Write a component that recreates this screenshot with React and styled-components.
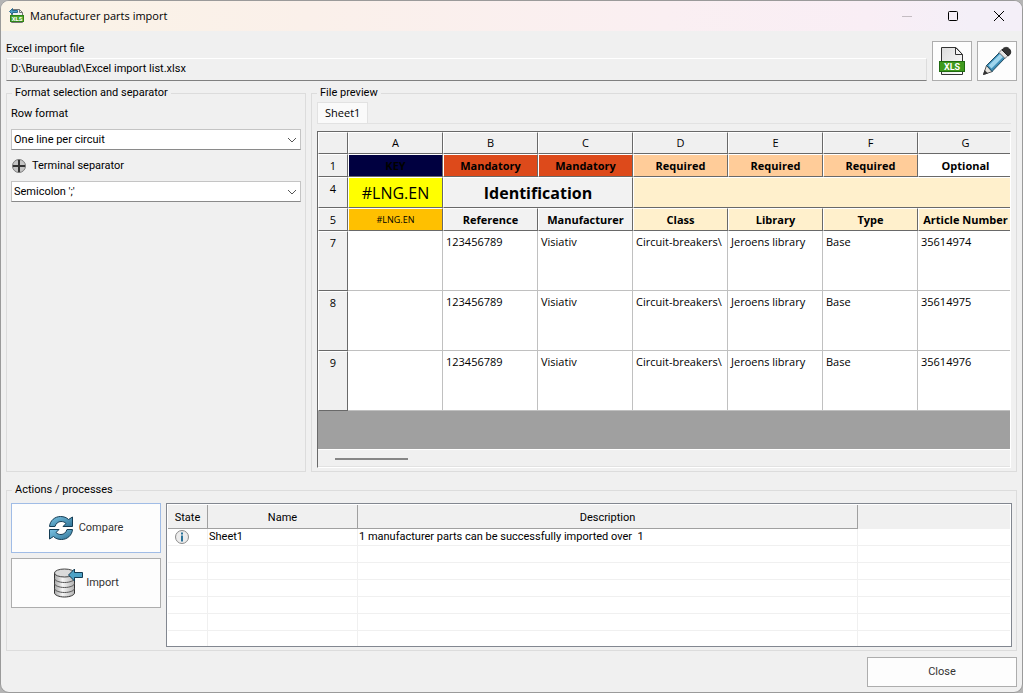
import React, { useState } from 'react';
import styled, { createGlobalStyle } from 'styled-components';

const GlobalStyle = createGlobalStyle`
  * {
    box-sizing: border-box;
  }
  body {
    margin: 0;
    background: #b4b4b4;
    font-family: Roboto, 'Open Sans', sans-serif;
    font-size: 11px;
    line-height: 16px;
    color: #000;
  }
  button, input, select {
    font: inherit;
    color: inherit;
  }
`;

const Window = styled.main`
  display: flex;
  flex-direction: column;
  min-height: 100vh;
  border: 1px solid #9a9a9a;
  border-radius: 9px;
  background: #f0f0f0;
  overflow: hidden;
`;

const TitleBar = styled.header`
  display: flex;
  align-items: center;
  height: 30px;
  padding-left: 8px;
  background: linear-gradient(90deg, #faf3e6 0%, #faf0ea 30%, #faeff2 65%, #f9eef5 85%, #f4eff8 95%);
`;

const Title = styled.h1`
  flex: 1;
  margin: 0 0 0 5px;
  font-family: 'Open Sans', 'Noto Sans', sans-serif;
  font-size: 11px;
  font-weight: 400;
`;

const CaptionButton = styled.button`
  display: flex;
  align-items: center;
  justify-content: center;
  width: 46px;
  height: 30px;
  padding: 0;
  border: 0;
  background: none;
`;

const Body = styled.div`
  flex: 1;
  display: flex;
  flex-direction: column;
  padding: 10px 5px 5px;
`;

const FileRow = styled.div`
  display: flex;
  gap: 5px;
`;

const FileField = styled.div`
  flex: 1;
  display: flex;
  flex-direction: column;
  justify-content: space-between;
`;

const PathInput = styled.input`
  width: 100%;
  height: 23px;
  padding: 0 4px 2px;
  border: 1px solid #dcdcdc;
  border-top-color: #fff;
  border-bottom-color: #808080;
  background: #f0f0f0;
`;

const PushButton = styled.button`
  display: flex;
  align-items: center;
  justify-content: center;
  gap: ${(props) => props.$gap || 0}px;
  width: ${(props) => props.$width}px;
  height: ${(props) => props.$height}px;
  padding: 0;
  border: 1px solid ${(props) => (props.$active ? '#a0bce6' : '#adadad')};
  background: #fdfdfd;
  color: #333;
`;

const Panels = styled.div`
  flex: 1;
  display: flex;
  gap: 5px;
  margin-top: 4px;
`;

const Group = styled.fieldset`
  display: flex;
  flex-direction: column;
  flex: ${(props) => props.$flex || 'none'};
  min-width: 0;
  margin: ${(props) => props.$top || 0}px 0 0;
  padding: ${(props) => props.$padding};
  border: 1px solid #dcdcdc;

  legend {
    margin-left: ${(props) => props.$legend || 0}px;
    padding: 0 3px;
  }
`;

const FieldLabel = styled.label`
  display: flex;
  align-items: center;
  gap: 5px;
  margin-top: ${(props) => props.$top || 0}px;
`;

const SelectBox = styled.div`
  display: grid;
  align-items: center;
  margin-top: 7px;

  select, svg {
    grid-area: 1 / 1;
  }
  select {
    appearance: none;
    width: 100%;
    height: 21px;
    padding: 0 20px 0 2px;
    border: 1px solid #c4c4c4;
    border-bottom-color: #8a8a8a;
    border-radius: 0;
    background: #fff;
  }
  svg {
    justify-self: end;
    margin-right: 4px;
    pointer-events: none;
  }
`;

const Tabs = styled.div`
  display: flex;
  border-bottom: 1px solid #e2e2e2;
`;

const Tab = styled.button`
  height: 21px;
  padding: 0 7px;
  border: 1px solid #e2e2e2;
  border-bottom: 0;
  background: #fafafa;
  font-family: 'Open Sans', 'Noto Sans', sans-serif;
`;

const SheetFrame = styled.div`
  flex: 1;
  display: flex;
  flex-direction: column;
  margin-top: 7px;
  border: 1px solid #fff;
  border-top: 1px solid #696969;
  border-left: 1px solid #696969;
  background: #a0a0a0;
`;

const SheetScroll = styled.div`
  flex: 1;
  overflow: hidden;
`;

const Sheet = styled.table`
  table-layout: fixed;
  width: 695px;
  border-collapse: separate;
  border-spacing: 0;
  font-family: 'Open Sans', 'Noto Sans', sans-serif;

  th, td {
    padding: 0;
    overflow: hidden;
    white-space: nowrap;
  }
`;

const HeadCell = styled.th`
  height: ${(props) => props.$height || 23}px;
  border: 1px solid #696969;
  border-top-color: #fff;
  border-left-color: #fff;
  background: ${(props) => props.$bg || '#f0f0f0'};
  font-size: ${(props) => props.$size || 11}px;
  font-weight: ${(props) => (props.$bold ? 700 : 400)};
  color: #000;
`;

const RowHead = styled(HeadCell)`
  vertical-align: top;

  span {
    display: block;
    padding-top: 3px;
  }
`;

const DataCell = styled.td`
  height: 60px;
  border-right: 1px solid #c0c0c0;
  border-bottom: 1px solid #c0c0c0;
  background: #fff;
  vertical-align: top;

  span {
    display: block;
    padding: 3px 0 0 3px;
  }
`;

const ScrollTrack = styled.div`
  height: 18px;
  padding: 8px 17px 0;
  border-top: 1px solid #fff;
  border-bottom: 1px solid #e2e2e2;
  background: #f0f0f0;
`;

const ScrollThumb = styled.div`
  width: 73px;
  height: 2px;
  background: #868686;
`;

const ActionsRow = styled.div`
  display: flex;
  gap: 5px;
`;

const ActionButtons = styled.div`
  display: flex;
  flex-direction: column;
  gap: 5px;
`;

const LogFrame = styled.div`
  flex: 1;
  height: 144px;
  padding: 1px;
  border: 1px solid #828790;
  background: #fff;
  overflow: hidden;
`;

const Log = styled.table`
  table-layout: fixed;
  width: 100%;
  border-collapse: separate;
  border-spacing: 0;

  th {
    height: 24px;
    padding: 2px 0 0;
    border-right: 1px solid #a0a0a0;
    border-bottom: 1px solid #a0a0a0;
    background: #f0f0f0;
    font-weight: 400;
  }
  th:last-child {
    border-color: #f0f0f0;
  }
  td {
    height: 17px;
    padding: 0 0 0 1px;
    border-right: 1px solid #f0f0f0;
    border-bottom: 1px solid #f0f0f0;
    white-space: pre;
  }
  td:last-child {
    border-right: 0;
  }
  tr > td:first-child {
    padding-left: 7px;
  }
  svg {
    display: block;
  }
`;

const Footer = styled.footer`
  display: flex;
  justify-content: flex-end;
  margin-top: 6px;
`;

const XlsIcon = () => (
  <svg width="30" height="30" viewBox="0 0 30 30" aria-hidden="true">
    <defs>
      <linearGradient id="sheet" x1="0" y1="0" x2="1" y2="1">
        <stop offset="0" stopColor="#dcdcdc" />
        <stop offset="1" stopColor="#fff" />
      </linearGradient>
    </defs>
    <path d="M4.500 1.500h14.500l6.500 7v20h-21z" fill="url(#sheet)" stroke="#333" />
    <path d="M18.500 1.500v7h7z" fill="#f4f4f4" stroke="#333" />
    <rect x="2.500" y="15.500" width="25" height="10" fill="#3f9a1e" stroke="#1f6b10" />
    <text x="15" y="24" textAnchor="middle" fontFamily="Roboto, sans-serif" fontWeight="700" fontSize="9" fill="#fff">
      XLS
    </text>
  </svg>
);

const ImportXlsIcon = () => (
  <svg width="16" height="16" viewBox="0 0 16 16" aria-hidden="true">
    <path d="M2.500 1.500h8l3 3v10h-11z" fill="#f2f2f2" stroke="#777" />
    <path d="M10.500 1.500v3h3" fill="none" stroke="#777" />
    <rect x="1.500" y="7.500" width="13" height="6" fill="#4ba52a" stroke="#2f8418" />
    <text x="8" y="13" textAnchor="middle" fontFamily="Roboto, sans-serif" fontWeight="700" fontSize="6" fill="#fff">
      XLS
    </text>
    <path d="M.5 3.500l3-3V2.500h5v2h-5v2z" fill="#4a9cc4" stroke="#2a6a8c" />
  </svg>
);

const PencilIcon = () => (
  <svg width="30" height="30" viewBox="0 0 30 30" aria-hidden="true">
    <path d="M1.500 28.500l3-9 6 6z" fill="#e8e4de" stroke="#555" />
    <path d="M1 29l1.500-5 3.500 3.500z" fill="#333" />
    <path d="M4.500 19.500L18 6l5.500 5.500L10 25.500z" fill="#3d8fb8" stroke="#1f4a60" />
    <path d="M6.500 19.500L18 8l3 3L9.500 22.500z" fill="#9fd6ee" />
    <path d="M17 6.500l3.500-3.500 6 6-3.500 3.500z" fill="#e4e4e4" stroke="#777" />
    <path d="M20 4c1.500-3 5.500-3.500 7.500-1s1.500 5.500-1.500 7z" fill="#333" stroke="#222" />
  </svg>
);

const RefreshIcon = () => (
  <svg width="24" height="24" viewBox="0 0 24 24" aria-hidden="true">
    <defs>
      <linearGradient id="blue" x1="0" y1="0" x2="1" y2="1">
        <stop offset="0" stopColor="#7cc4e4" />
        <stop offset="1" stopColor="#2f7396" />
      </linearGradient>
    </defs>
    <g fill="url(#blue)" stroke="#143c54">
      <path d="M.5 10.500C1 4.500 6 .5 11.500.5c3.500 0 6 1 8 3l4-2.500v9.500H14l3-3c-1.500-1.500-3-2-5-2-3 0-5 2-6 5z" />
      <path d="M23.500 13.500C23 19.500 18 23.500 12.500 23.500c-3.500 0-6-1-8-3l-4 2.500v-9.500H10l-3 3c1.500 1.500 3 2 5 2 3 0 5-2 6-5z" />
    </g>
  </svg>
);

const DatabaseIcon = () => (
  <svg width="30" height="30" viewBox="0 0 30 30" aria-hidden="true">
    <defs>
      <linearGradient id="metal" x1="0" y1="0" x2="1" y2="0">
        <stop offset="0" stopColor="#a8a8a8" />
        <stop offset="0.4" stopColor="#f4f4f4" />
        <stop offset="1" stopColor="#b4b4b4" />
      </linearGradient>
    </defs>
    <path d="M1.500 5v20c0 2 4.500 4 10 4s10-2 10-4V5z" fill="url(#metal)" stroke="#333" />
    <ellipse cx="11.500" cy="5" rx="10" ry="4" fill="#dadada" stroke="#444" />
    <path d="M1.500 10.500c0 2 4.500 4 10 4s10-2 10-4M1.500 15.500c0 2 4.500 4 10 4s10-2 10-4M1.500 20.500c0 2 4.500 4 10 4s10-2 10-4" fill="none" stroke="#555" />
    <path d="M15.500 7l6-6v3.500h8v5h-8V13z" fill="#4ea2c6" stroke="#143c54" />
  </svg>
);

const PlusIcon = () => (
  <svg width="16" height="16" viewBox="0 0 16 16" aria-hidden="true">
    <circle cx="8" cy="8" r="6.500" fill="#c4c4c4" stroke="#777" />
    <path d="M8 2v12M2 8h12" stroke="#333" strokeWidth="2" />
  </svg>
);

const InfoIcon = () => (
  <svg width="14" height="14" viewBox="0 0 14 14" role="img" aria-label="Information">
    <circle cx="7" cy="7" r="6.500" fill="#ececec" stroke="#8a8a8a" />
    <path d="M7 2.500v2M7 5.500v6" stroke="#2b7299" strokeWidth="2" />
  </svg>
);

const Chevron = () => (
  <svg width="10" height="6" viewBox="0 0 10 6" aria-hidden="true">
    <path d="M1 1l4 4 4-4" fill="none" stroke="#555" />
  </svg>
);

const columns = ['A', 'B', 'C', 'D', 'E', 'F', 'G'];

const requirements = [
  { text: 'KEY', bg: '#000040' },
  { text: 'Mandatory', bg: '#dd4a1b' },
  { text: 'Mandatory', bg: '#dd4a1b' },
  { text: 'Required', bg: '#ffcc99' },
  { text: 'Required', bg: '#ffcc99' },
  { text: 'Required', bg: '#ffcc99' },
  { text: 'Optional', bg: '#ffffff' },
];

const fields = [
  { text: 'Reference', bg: '#f2f2f2' },
  { text: 'Manufacturer', bg: '#f2f2f2' },
  { text: 'Class', bg: '#fff0cc' },
  { text: 'Library', bg: '#fff0cc' },
  { text: 'Type', bg: '#fff0cc' },
  { text: 'Article Number', bg: '#fff0cc' },
];

const parts = [
  { row: 7, article: '35614974' },
  { row: 8, article: '35614975' },
  { row: 9, article: '35614976' },
];

const emptyRows = [1, 2, 3, 4, 5, 6];

function SheetPreview() {
  return (
    <Sheet>
      <colgroup>
        <col width="30" />
        {columns.map((column) => (
          <col key={column} width="95" />
        ))}
      </colgroup>
      <thead>
        <tr>
          <HeadCell $height={22} />
          {columns.map((column) => (
            <HeadCell key={column} $height={22} scope="col">{column}</HeadCell>
          ))}
        </tr>
      </thead>
      <tbody>
        <tr>
          <RowHead scope="row"><span>1</span></RowHead>
          {requirements.map((item, index) => (
            <HeadCell key={columns[index]} as="td" align="center" $bold $bg={item.bg}>
              {item.text}
            </HeadCell>
          ))}
        </tr>
        <tr>
          <RowHead scope="row" $height={31}><span>4</span></RowHead>
          <HeadCell as="td" align="center" $bg="#ffff00" $size={16}>#LNG.EN</HeadCell>
          <HeadCell as="td" align="center" colSpan={2} $bg="#f2f2f2" $size={16} $bold>Identification</HeadCell>
          <HeadCell as="td" colSpan={4} $bg="#fff0cc" />
        </tr>
        <tr>
          <RowHead scope="row"><span>5</span></RowHead>
          <HeadCell as="td" align="center" $bg="#ffc000" $size={9}>#LNG.EN</HeadCell>
          {fields.map((field) => (
            <HeadCell key={field.text} as="td" align="center" $bold $bg={field.bg}>{field.text}</HeadCell>
          ))}
        </tr>
        {parts.map((part) => (
          <tr key={part.row}>
            <RowHead scope="row" $height={60}><span>{part.row}</span></RowHead>
            <DataCell />
            <DataCell><span>123456789</span></DataCell>
            <DataCell><span>Visiativ</span></DataCell>
            <DataCell><span>Circuit-breakers\</span></DataCell>
            <DataCell><span>Jeroens library</span></DataCell>
            <DataCell><span>Base</span></DataCell>
            <DataCell><span>{part.article}</span></DataCell>
          </tr>
        ))}
      </tbody>
    </Sheet>
  );
}

export default function App() {
  const [rowFormat, setRowFormat] = useState('circuit');
  const [separator, setSeparator] = useState('semicolon');

  return (
    <>
      <GlobalStyle />
      <Window>
        <TitleBar>
          <ImportXlsIcon />
          <Title>Manufacturer parts import</Title>
          <CaptionButton type="button" aria-label="Minimize">
            <svg width="10" height="10"><path d="M0 5.500h10" stroke="#c4bcc2" /></svg>
          </CaptionButton>
          <CaptionButton type="button" aria-label="Maximize">
            <svg width="10" height="10"><rect x="0.500" y="0.500" width="9" height="9" rx="1" fill="none" stroke="#000" /></svg>
          </CaptionButton>
          <CaptionButton type="button" aria-label="Close window">
            <svg width="10" height="10"><path d="M0 0l10 10M10 0L0 10" stroke="#000" /></svg>
          </CaptionButton>
        </TitleBar>
        <Body>
          <FileRow>
            <FileField>
              <label htmlFor="import-file">Excel import file</label>
              <PathInput id="import-file" readOnly value="D:\Bureaublad\Excel import list.xlsx" />
            </FileField>
            <PushButton type="button" aria-label="Choose file" $width={40} $height={40}>
              <XlsIcon />
            </PushButton>
            <PushButton type="button" aria-label="Edit file" $width={40} $height={40}>
              <PencilIcon />
            </PushButton>
          </FileRow>
          <Panels>
            <Group $flex="0 0 300px" $padding="5px 4px 3px" $legend={1}>
              <legend>Format selection and separator</legend>
              <FieldLabel htmlFor="row-format">Row format</FieldLabel>
              <SelectBox>
                <select id="row-format" value={rowFormat} onChange={(e) => setRowFormat(e.target.value)}>
                  <option value="circuit">One line per circuit</option>
                  <option value="part">One line per part</option>
                </select>
                <Chevron />
              </SelectBox>
              <FieldLabel htmlFor="separator" $top={8}>
                <PlusIcon />
                Terminal separator
              </FieldLabel>
              <SelectBox>
                <select id="separator" value={separator} onChange={(e) => setSeparator(e.target.value)}>
                  <option value="semicolon">Semicolon &apos;;&apos;</option>
                  <option value="comma">Comma &apos;,&apos;</option>
                </select>
                <Chevron />
              </SelectBox>
            </Group>
            <Group $flex="1" $padding="1px 5px 3px">
              <legend>File preview</legend>
              <Tabs>
                <Tab type="button">Sheet1</Tab>
              </Tabs>
              <SheetFrame>
                <SheetScroll>
                  <SheetPreview />
                </SheetScroll>
                <ScrollTrack>
                  <ScrollThumb />
                </ScrollTrack>
              </SheetFrame>
            </Group>
          </Panels>
          <Group $top={10} $padding="5px 4px 3px" $legend={1}>
            <legend>Actions / processes</legend>
            <ActionsRow>
              <ActionButtons>
                <PushButton type="button" $active $gap={6} $width={150} $height={50}>
                  <RefreshIcon />
                  Compare
                </PushButton>
                <PushButton type="button" $gap={3} $width={150} $height={50}>
                  <DatabaseIcon />
                  Import
                </PushButton>
              </ActionButtons>
              <LogFrame>
                <Log>
                  <colgroup>
                    <col width="40" />
                    <col width="150" />
                    <col width="500" />
                    <col />
                  </colgroup>
                  <thead>
                    <tr>
                      <th scope="col">State</th>
                      <th scope="col">Name</th>
                      <th scope="col">Description</th>
                      <th aria-label="Blank" />
                    </tr>
                  </thead>
                  <tbody>
                    <tr>
                      <td><InfoIcon /></td>
                      <td>Sheet1</td>
                      <td>{'1 manufacturer parts can be successfully imported over  1'}</td>
                      <td />
                    </tr>
                    {emptyRows.map((row) => (
                      <tr key={row}>
                        <td />
                        <td />
                        <td />
                        <td />
                      </tr>
                    ))}
                  </tbody>
                </Log>
              </LogFrame>
            </ActionsRow>
          </Group>
          <Footer>
            <PushButton type="button" $width={150} $height={30}>Close</PushButton>
          </Footer>
        </Body>
      </Window>
    </>
  );
}
